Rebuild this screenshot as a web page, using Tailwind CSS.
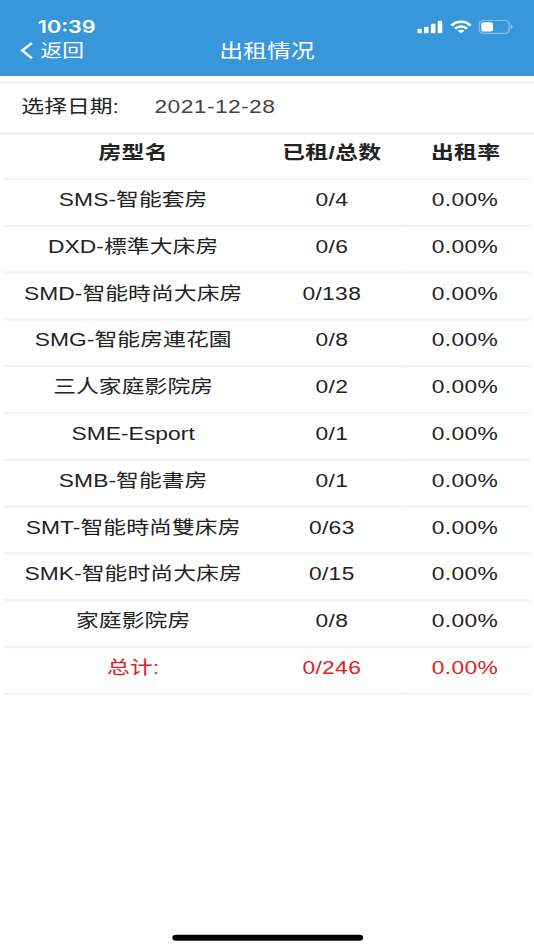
<!DOCTYPE html>
<html lang="zh-CN">
<head>
<meta charset="utf-8">
<title>出租情况</title>
<script src="https://cdn.jsdelivr.net/npm/@tailwindcss/browser@4"></script>
</head>
<body class="bg-white w-[534px] h-[950px] overflow-hidden">
<!-- 375x812 phone canvas stretched to the window -->
<div class="w-[375px] h-[812px] origin-top-left [transform:scale(1.424,1.17)] flex flex-col bg-white text-[#222] text-[16px] font-['Liberation_Sans','Noto_Sans_CJK_SC',sans-serif]">
  <header class="h-[65px] shrink-0 bg-[#3896db] text-white flex flex-col">
    <div class="h-[33px] pt-[13px] pl-[26.5px] pr-[14.7px] flex justify-between">
      <span class="font-['Inter',sans-serif] font-semibold text-[15.2px] leading-[20px]">10:39</span>
      <div class="flex items-center h-[20px] gap-[4.5px]">
        <svg class="w-[18px] h-[12px]" viewBox="0 0 18 12" fill="white"><rect x="0" y="7.5" width="3.2" height="4" rx=".8"/><rect x="4.8" y="5.8" width="3.2" height="5.7" rx=".8"/><rect x="9.6" y="3.3" width="3.2" height="8.2" rx=".8"/><rect x="14.4" y=".8" width="3.2" height="10.7" rx=".8"/></svg>
        <svg class="w-[15.5px] h-[12px]" viewBox="0 0 16 12" fill="none" stroke="white" stroke-width="2.2"><path d="M1 4.8C5 .3 11 .3 15 4.8"/><path d="M3.6 7.5c2.6-2.6 6.2-2.6 8.8 0"/><path d="M8 11.7 5.5 9.4c1.3-1.2 3.7-1.2 5 0z" fill="white" stroke="none"/></svg>
        <svg class="w-[24.5px] h-[12px]" viewBox="0 0 25 12" preserveAspectRatio="none"><rect x=".5" y=".5" width="21.5" height="11" rx="3" fill="none" stroke="white" stroke-opacity=".4"/><rect x="2" y="2" width="8.4" height="8" rx="1.5" fill="white"/><path d="M23.3 4v4c1.7-.6 1.7-3.4 0-4z" fill="white" fill-opacity=".5"/></svg>
      </div>
    </div>
    <div class="h-[20px] grid grid-cols-[1fr_auto_1fr] items-center leading-[20px]">
      <div class="flex items-center pl-[14px] gap-[4.5px]">
        <svg class="w-[10px] h-[16px]" viewBox="0 0 10 16" fill="none" stroke="white" stroke-width="1.9"><path d="M8.4 .8 1.6 7.2 8.4 13.8"/></svg>
        <span class="text-[15.3px]">返回</span>
      </div>
      <h1 class="text-[16.8px] pt-[2px]">出租情况</h1>
    </div>
  </header>
  <div class="h-[6px] shrink-0 bg-[#fdfdfd] border-b border-[#e8e8ec]"></div>
  <div class="h-[43.5px] shrink-0 flex items-center border-b-2 border-[#f1f1f1] pt-[.5px] pl-[15px]">
    <span class="w-[93.5px]">选择日期:</span>
    <span class="text-[#444] tracking-[.3px]">2021-12-28</span>
  </div>
  <table class="mx-[3px] w-[369px] table-fixed border-collapse text-center leading-[20px] tracking-[.25px] [&_td]:p-0 [&_td]:pb-[4px] [&_th]:p-0 [&_th]:pb-[4px] [&_tr]:h-[40px] [&_tr]:border-b-2 [&_tr]:border-[#f2f2f2] [&_td:first-child]:tracking-[.05px] [&_td:last-child]:pr-[1px] [&_thead_tr]:h-[38.5px]">
    <colgroup><col class="w-[181px]"><col class="w-[98px]"><col class="w-[90px]"></colgroup>
    <thead><tr><th>房型名</th><th>已租/总数</th><th>出租率</th></tr></thead>
    <tbody>
      <tr><td>SMS-智能套房</td><td>0/4</td><td>0.00%</td></tr>
      <tr><td>DXD-標準大床房</td><td>0/6</td><td>0.00%</td></tr>
      <tr><td>SMD-智能時尚大床房</td><td>0/138</td><td>0.00%</td></tr>
      <tr><td>SMG-智能房連花園</td><td>0/8</td><td>0.00%</td></tr>
      <tr><td>三人家庭影院房</td><td>0/2</td><td>0.00%</td></tr>
      <tr><td>SME-Esport</td><td>0/1</td><td>0.00%</td></tr>
      <tr><td>SMB-智能書房</td><td>0/1</td><td>0.00%</td></tr>
      <tr><td>SMT-智能時尚雙床房</td><td>0/63</td><td>0.00%</td></tr>
      <tr><td>SMK-智能时尚大床房</td><td>0/15</td><td>0.00%</td></tr>
      <tr><td>家庭影院房</td><td>0/8</td><td>0.00%</td></tr>
      <tr class="text-[#e02020]"><td>总计:</td><td>0/246</td><td>0.00%</td></tr>
    </tbody>
  </table>
  <div class="mt-auto mb-[8.5px] mx-auto w-[134px] h-[5px] rounded-full bg-black"></div>
</div>
</body>
</html>
